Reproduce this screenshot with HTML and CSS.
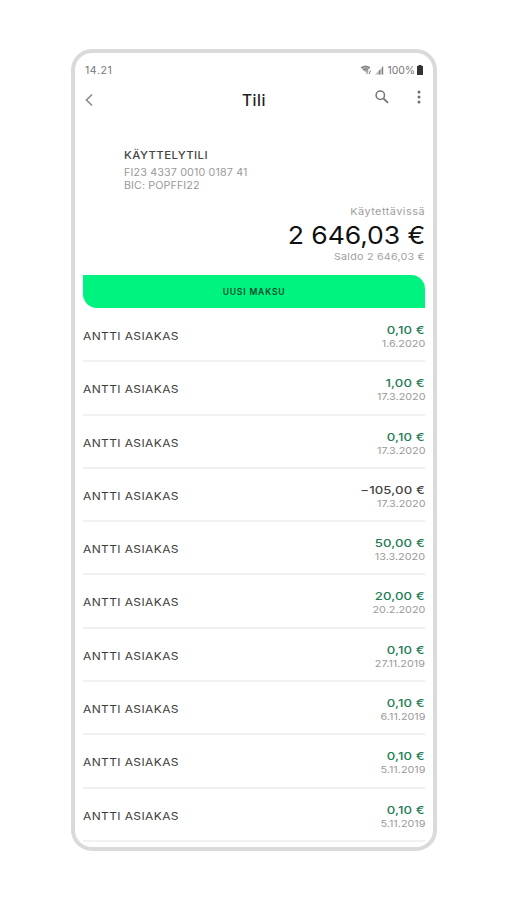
FILE: index.html
```html
<!DOCTYPE html>
<html lang="fi">
<head>
<meta charset="utf-8">
<title>Tili</title>
<link rel="stylesheet" href="styles.css">
</head>
<body>
<main class="phone">
  <div class="status">
    <span class="clock">14.21</span>
    <div class="indicators">
      <svg class="wifi" viewBox="0 0 12 10"><path d="M.5 2.500Q5.500-1 10.500 2.500L6 7.500Z" fill="#aaa"/><path d="M1 2.500q4.500-3 9 0M3 5q3-2 5 0M6.500 9l1.500-3M10.500 5.500 9 9" fill="none" stroke="#777" stroke-width="1"/></svg>
      <svg class="signal" viewBox="0 0 10 9"><path d="M0 9 9 0V9Z" fill="#bbb"/><path d="M5 9V4M8.500 9V0" stroke="#777"/></svg>
      <span class="percent">100%</span>
      <svg class="battery" viewBox="0 0 6 10"><path d="M1.500 1V0h3v1H6v9H0V1Z" fill="#333"/></svg>
    </div>
  </div>
  <header class="bar">
    <svg class="back" viewBox="0 0 8 14"><path d="M7 1.500 1.500 7 7 12.500" fill="none" stroke="#8a8a8a" stroke-width="1.600"/></svg>
    <h1 class="title">Tili</h1>
    <svg class="search" viewBox="0 0 14 14"><circle cx="5.300" cy="5.300" r="4.200" fill="none" stroke="#777" stroke-width="1.500"/><path d="m8.500 8.500 4.500 4.300" stroke="#777" stroke-width="1.800"/></svg>
    <svg class="more" viewBox="0 0 4 14"><g fill="#707070"><circle cx="2" cy="2" r="1.500"/><circle cx="2" cy="7" r="1.500"/><circle cx="2" cy="12" r="1.500"/></g></svg>
  </header>
  <section class="account">
    <h2 class="name">KÄYTTELYTILI</h2>
    <p class="iban">FI23 4337 0010 0187 41</p>
    <p class="bic">BIC: POPFFI22</p>
  </section>
  <section class="balance">
    <p class="label">Käytettävissä</p>
    <p class="total">2 646,03 €</p>
    <p class="saldo">Saldo 2 646,03 €</p>
  </section>
  <button class="pay">UUSI MAKSU</button>
  <ul class="list">
    <li class="row"><span class="payee">ANTTI ASIAKAS</span><div class="info"><span class="sum">0,10 €</span><span class="date">1.6.2020</span></div></li>
    <li class="row"><span class="payee">ANTTI ASIAKAS</span><div class="info"><span class="sum">1,00 €</span><span class="date">17.3.2020</span></div></li>
    <li class="row"><span class="payee">ANTTI ASIAKAS</span><div class="info"><span class="sum">0,10 €</span><span class="date">17.3.2020</span></div></li>
    <li class="row"><span class="payee">ANTTI ASIAKAS</span><div class="info"><span class="sum debit">−105,00 €</span><span class="date">17.3.2020</span></div></li>
    <li class="row"><span class="payee">ANTTI ASIAKAS</span><div class="info"><span class="sum">50,00 €</span><span class="date">13.3.2020</span></div></li>
    <li class="row"><span class="payee">ANTTI ASIAKAS</span><div class="info"><span class="sum">20,00 €</span><span class="date">20.2.2020</span></div></li>
    <li class="row"><span class="payee">ANTTI ASIAKAS</span><div class="info"><span class="sum">0,10 €</span><span class="date">27.11.2019</span></div></li>
    <li class="row"><span class="payee">ANTTI ASIAKAS</span><div class="info"><span class="sum">0,10 €</span><span class="date">6.11.2019</span></div></li>
    <li class="row"><span class="payee">ANTTI ASIAKAS</span><div class="info"><span class="sum">0,10 €</span><span class="date">5.11.2019</span></div></li>
    <li class="row"><span class="payee">ANTTI ASIAKAS</span><div class="info"><span class="sum">0,10 €</span><span class="date">5.11.2019</span></div></li>
  </ul>
</main>
</body>
</html>
```
FILE: styles.css
```css
* { box-sizing: border-box; margin: 0; padding: 0; }
body {
  height: 900px;
  padding: 49px 0 0 71px;
  background: #fff;
  font-family: Inter, "Liberation Sans", sans-serif;
  overflow: hidden;
}
.phone {
  width: 366px;
  height: 802px;
  padding: 0 8px;
  border: 4px solid #dadada;
  border-radius: 21px;
  background: #fff;
}
.status {
  display: flex;
  justify-content: space-between;
  align-items: center;
  height: 18px;
  margin-top: 8px;
  padding: 0 2px;
}
.clock { font-size: 10.5px; letter-spacing: .6px; color: #777; }
.indicators { display: flex; align-items: center; }
.wifi { width: 12px; height: 10px; }
.signal { width: 9px; height: 9px; margin: 0 4px 0 3px; }
.percent { font-size: 10.5px; color: #777; letter-spacing: -.1px; }
.battery { width: 6px; height: 10px; margin-left: 2px; }
.bar {
  display: grid;
  grid-template-columns: 8px 1fr 14px 4px;
  height: 44px;
  padding: 0 4px 0 2px;
}
.back { width: 8px; height: 14px; margin-top: 14px; }
.title {
  margin: 12px 0 0 12px;
  font-size: 15.500px;
  line-height: 20px;
  font-weight: 500;
  letter-spacing: .6px;
  text-align: center;
  color: #222;
}
.search { width: 14px; height: 14px; margin: 11px 0 0 -28px; }
.more { width: 4px; height: 14px; margin-top: 11px; }
.account { margin: 25px 0 0 41px; color: #999; }
.name, .iban, .bic, .payee { transform-origin: left center; }
.label, .total, .saldo, .sum, .date { transform-origin: right center; }
.name { font-size: 10.5px; line-height: 16px; font-weight: 500; letter-spacing: .35px; color: #444; transform: scaleX(1.09); }
.iban, .bic { font-size: 10px; line-height: 13px; transform: scaleX(1.07); }
.iban { margin-top: 2px; letter-spacing: .15px; }
.bic { letter-spacing: .1px; }
.balance { margin-top: 13px; text-align: right; white-space: nowrap; color: #a0a0a0; }
.label { font-size: 9.5px; line-height: 14px; letter-spacing: .4px; transform: scaleX(1.15); }
.total { font-size: 24.5px; line-height: 32px; letter-spacing: -.1px; color: #111; transform: scaleX(1.085); }
.saldo { font-size: 9.5px; line-height: 12px; letter-spacing: .2px; transform: scaleX(1.13); }
.pay {
  display: block;
  width: 342px;
  height: 33px;
  margin-top: 12px;
  padding-top: 1px;
  border: 0;
  border-radius: 0 14px 0 14px;
  background: #00f27f;
  color: #064c2d;
  font: 600 8.5px Inter, sans-serif;
  letter-spacing: .85px;
}
.list { padding-top: 1px; list-style: none; }
.row {
  display: flex;
  justify-content: space-between;
  height: 53.3px;
  border-bottom: 2px solid #f1f1f1;
}
.payee { margin-top: 20px; font-size: 10.5px; line-height: 16px; letter-spacing: .35px; color: #3c3c3c; transform: scaleX(1.14); }
.info { display: flex; flex-direction: column; align-items: flex-end; padding-top: 14px; }
.sum { font-size: 11px; line-height: 14px; font-weight: 500; letter-spacing: .1px; color: #1d7d54; transform: scaleX(1.2); }
.debit { color: #444; }
.date { margin-top: -1px; font-size: 9.5px; line-height: 15px; color: #999; transform: scaleX(1.14); }
```
